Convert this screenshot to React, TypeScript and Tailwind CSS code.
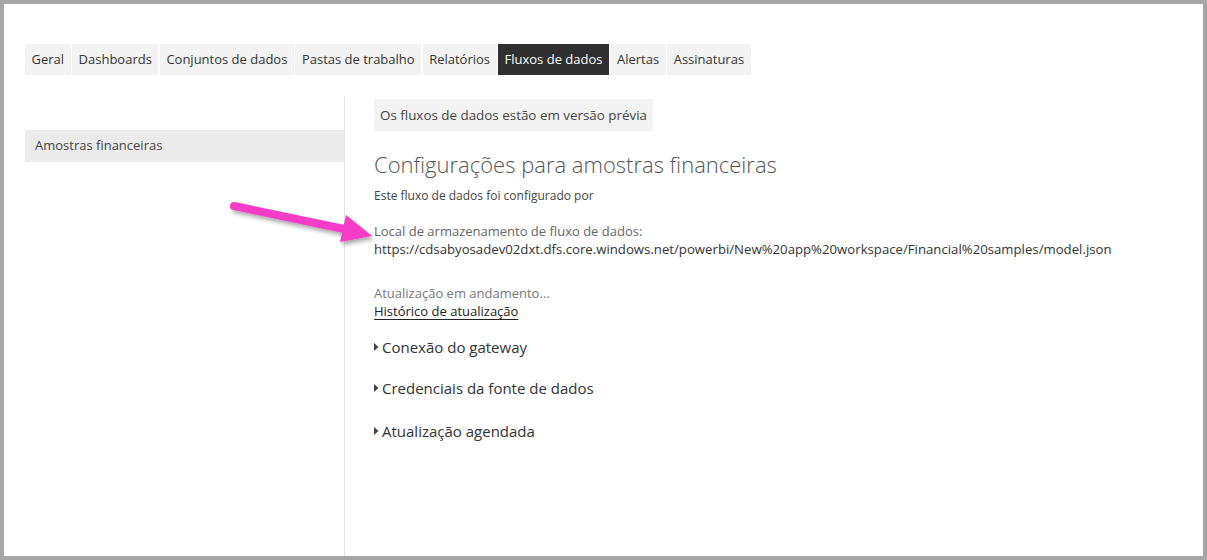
const TABS = [
  "Geral",
  "Dashboards",
  "Conjuntos de dados",
  "Pastas de trabalho",
  "Relatórios",
  "Fluxos de dados",
  "Alertas",
  "Assinaturas",
];

const SECTIONS = [
  { label: "Conexão do gateway", mt: "mt-[16px]" },
  { label: "Credenciais da fonte de dados", mt: "mt-[19px]" },
  { label: "Atualização agendada", mt: "mt-[21px]" },
];

function Caret() {
  return (
    <svg width="7" height="10" viewBox="0 0 7 10" className="mr-[2px] shrink-0">
      <path d="M1 1 L5.5 5 L1 9 Z" fill="#444" />
    </svg>
  );
}

function PinkArrow() {
  return (
    <svg
      className="absolute left-[218px] top-[188px] pointer-events-none"
      width="160"
      height="64"
      viewBox="0 0 160 64"
    >
      <defs>
        <filter id="sh" x="-20%" y="-40%" width="140%" height="180%">
          <feDropShadow dx="2" dy="3" stdDeviation="2" floodColor="#000" floodOpacity="0.35" />
        </filter>
      </defs>
      <g filter="url(#sh)">
        <line x1="12" y1="14" x2="122" y2="37" stroke="#f53cc8" strokeWidth="8" strokeLinecap="round" />
        <path d="M124 23 L150 44 L118 50 Z" fill="#f53cc8" />
      </g>
    </svg>
  );
}

export default function App() {
  return (
    <div
      className="w-[1207px] h-[560px] bg-[#a6a6a6] p-[4px] text-[#333]"
      style={{ fontFamily: '"Open Sans", "Noto Sans", sans-serif' }}
    >
      <div className="relative h-full bg-white pl-[21px] pt-[40px] flex flex-col">
        {/* tabs */}
        <div className="flex gap-[1.5px]">
          {TABS.map((t) => (
            <div
              key={t}
              className={
                t === "Fluxos de dados"
                  ? "h-[31px] px-[6.5px] flex items-center text-[13px] bg-[#2f2f2f] text-white"
                  : "h-[31px] px-[6.5px] flex items-center text-[13px] bg-[#f3f3f3] text-[#333]"
              }
            >
              {t}
            </div>
          ))}
        </div>

        <div className="flex flex-1 mt-[22px]">
          {/* left list */}
          <div className="w-[320px] pt-[33px] border-r border-[#e3e3e3]">
            <div className="h-[32px] bg-[#ebebeb] pl-[10px] flex items-center text-[13px] text-[#444]">
              Amostras financeiras
            </div>
          </div>

          {/* right content */}
          <div className="pl-[29px] pt-[2px] flex flex-col items-start">
            <div className="h-[32px] bg-[#f3f3f3] px-[6px] flex items-center text-[13.4px] text-[#444]">
              Os fluxos de dados estão em versão prévia
            </div>
            <h1 className="mt-[18px] text-[22px] font-light text-[#555] leading-[30px]">
              Configurações para amostras financeiras
            </h1>
            <p className="mt-[8px] text-[12px] text-[#444] leading-[18px]">
              Este fluxo de dados foi configurado por
            </p>
            <p className="mt-[17px] text-[13px] text-[#666] leading-[18px]">
              Local de armazenamento de fluxo de dados:
            </p>
            <p className="text-[13.2px] text-[#333] leading-[18px]">
              https://cdsabyosadev02dxt.dfs.core.windows.net/powerbi/New%20app%20workspace/Financial%20samples/model.json
            </p>
            <p className="mt-[26px] text-[13px] text-[#777] leading-[18px]">
              Atualização em andamento...
            </p>
            <p className="text-[13px] text-[#222] leading-[18px] underline underline-offset-[3px]">
              Histórico de atualização
            </p>
            {SECTIONS.map((s) => (
              <div key={s.label} className={`${s.mt} -ml-[1px] flex items-center text-[15px] text-[#333] leading-[22px]`}>
                <Caret />
                {s.label}
              </div>
            ))}
          </div>
        </div>

        <PinkArrow />
      </div>
    </div>
  );
}
